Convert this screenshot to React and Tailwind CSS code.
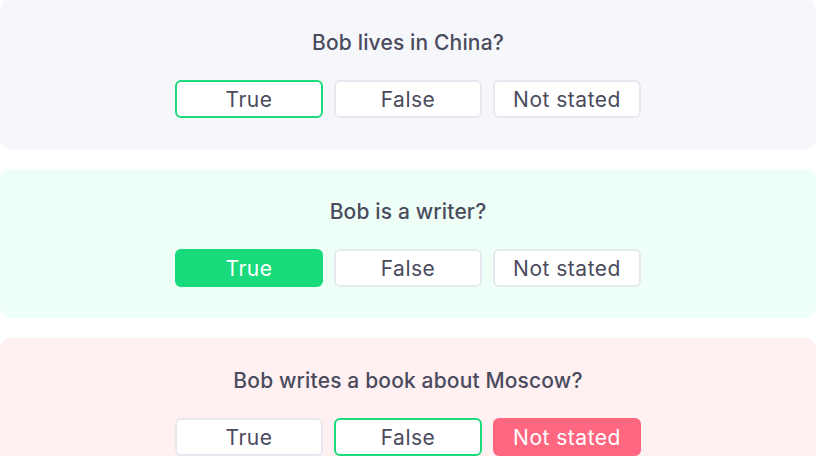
import React from "react";

const cards = [
  { q: "Bob lives in China?", bg: "bg-[#f6f7fb]", states: ["outline", "none", "none"] },
  { q: "Bob is a writer?", bg: "bg-[#edfff6]", states: ["green", "none", "none"] },
  { q: "Bob writes a book about Moscow?", bg: "bg-[#fff0f2]", states: ["none", "outline", "red"] },
];

const labels = ["True", "False", "Not stated"];

function Btn({ label, state }) {
  let cls = "bg-white border-[#e8e8f0] text-[#4b4b5e]";
  if (state === "outline") cls = "bg-white border-[#1ed97d] text-[#4b4b5e]";
  if (state === "green") cls = "bg-[#19db7c] border-[#19db7c] text-white";
  if (state === "red") cls = "bg-[#ff667f] border-[#ff667f] text-white";
  return (
    <div className={`w-[148px] h-[38px] rounded-[6px] border-2 flex items-center justify-center pt-[2px] text-[21px] tracking-[0.5px] ${cls}`}>
      {label}
    </div>
  );
}

export default function App() {
  return (
    <div className="w-[816px] h-[456px] overflow-hidden bg-white flex flex-col gap-[20px]" style={{ fontFamily: 'Inter, sans-serif' }}>
      {cards.map((c, i) => (
        <div key={i} className={`${c.bg} rounded-[10px] h-[149px] shrink-0 flex flex-col items-center pt-[29px]`}>
          <div className="text-[21px] leading-[28px] tracking-[0.15px] font-medium text-[#4b4b5e]">{c.q}</div>
          <div className="mt-[23px] flex gap-[11px]">
            {labels.map((l, j) => (
              <Btn key={j} label={l} state={c.states[j]} />
            ))}
          </div>
        </div>
      ))}
    </div>
  );
}
